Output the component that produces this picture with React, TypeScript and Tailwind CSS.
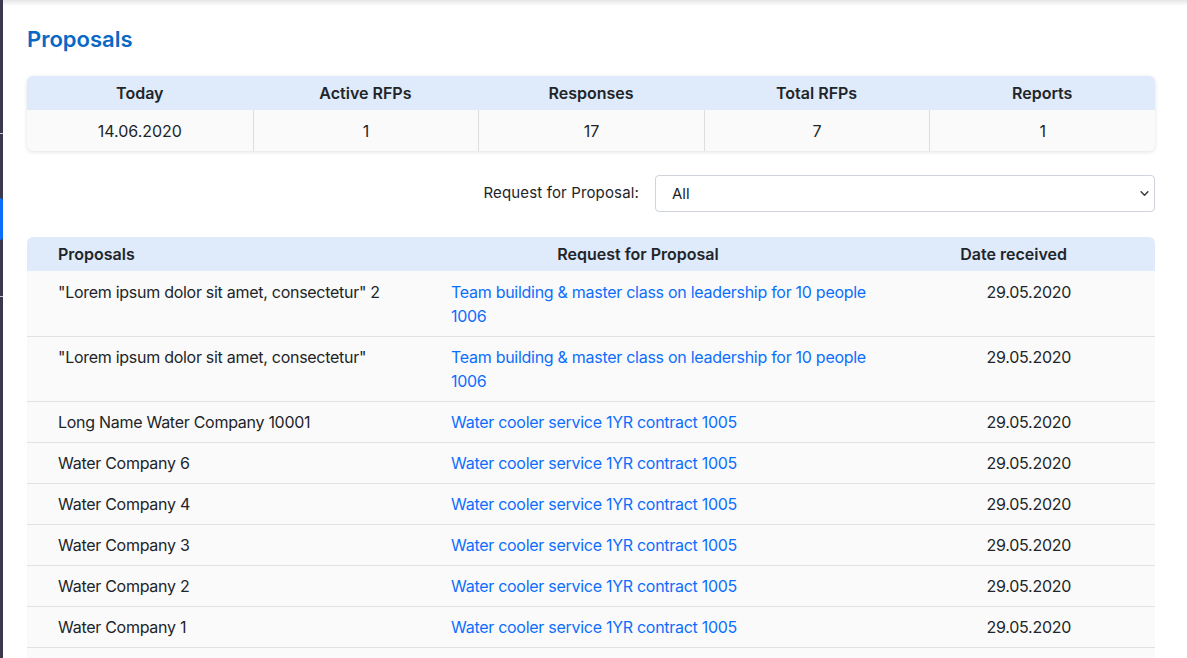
import React from "react";

const stats = [
  { label: "Today", value: "14.06.2020" },
  { label: "Active RFPs", value: "1" },
  { label: "Responses", value: "17" },
  { label: "Total RFPs", value: "7" },
  { label: "Reports", value: "1" },
];

const rows = [
  {
    name: "\"Lorem ipsum dolor sit amet, consectetur\" 2",
    rfp: "Team building & master class on leadership for 10 people 1006",
    date: "29.05.2020",
  },
  {
    name: "\"Lorem ipsum dolor sit amet, consectetur\"",
    rfp: "Team building & master class on leadership for 10 people 1006",
    date: "29.05.2020",
  },
  { name: "Long Name Water Company 10001", rfp: "Water cooler service 1YR contract 1005", date: "29.05.2020" },
  { name: "Water Company 6", rfp: "Water cooler service 1YR contract 1005", date: "29.05.2020" },
  { name: "Water Company 4", rfp: "Water cooler service 1YR contract 1005", date: "29.05.2020" },
  { name: "Water Company 3", rfp: "Water cooler service 1YR contract 1005", date: "29.05.2020" },
  { name: "Water Company 2", rfp: "Water cooler service 1YR contract 1005", date: "29.05.2020" },
  { name: "Water Company 1", rfp: "Water cooler service 1YR contract 1005", date: "29.05.2020" },
];

export default function App() {
  return (
    <div
      className="flex h-screen w-screen overflow-hidden bg-white text-[#212529]"
      style={{ fontFamily: "Inter, 'Noto Sans', sans-serif" }}
    >
      {/* Sidebar edge */}
      <div className="relative w-[3px] shrink-0 bg-[#3b3a4d]">
        <div className="absolute left-0 top-[133px] h-px w-full bg-[#c9c9d2]" />
        <div className="absolute left-0 top-[198px] h-[42px] w-full rounded-r-sm bg-[#0d6efd]" />
        <div className="absolute left-0 top-[296px] h-px w-full bg-[#c9c9d2]" />
      </div>

      {/* Main */}
      <div className="relative flex-1 overflow-hidden">
        <div className="absolute left-0 right-0 top-0 h-[6px] bg-gradient-to-b from-black/10 to-transparent" />
        <div className="pl-6 pr-8 pt-[25px]">
          <h1 className="mb-[22px] text-[22px] font-semibold leading-[29px] text-[#0868c6]">
            Proposals
          </h1>

          {/* Stats */}
          <div className="overflow-hidden rounded-md bg-[#fafafa] shadow-[0_1px_4px_rgba(0,0,0,0.12)]">
            <div className="grid grid-cols-5 bg-[#dfeafb]">
              {stats.map((s) => (
                <div key={s.label} className="h-[34px] text-center text-[16px] font-semibold leading-[34px]">
                  {s.label}
                </div>
              ))}
            </div>
            <div className="grid grid-cols-5">
              {stats.map((s, i) => (
                <div
                  key={s.label}
                  className={`h-[41px] pt-px text-center text-[16px] leading-[41px] ${
                    i > 0 ? "border-l border-[#dedede]" : ""
                  }`}
                >
                  {s.value}
                </div>
              ))}
            </div>
          </div>

          {/* Filter */}
          <div className="mt-[24px] flex items-center justify-end gap-4">
            <span className="text-[15px] tracking-[0.15px]">Request for Proposal:</span>
            <div className="flex h-[37px] w-[500px] items-center justify-between rounded border border-[#ced4da] bg-white pl-4 pr-[5px] text-[15px]">
              <span className="pt-px">All</span>
              <svg width="9" height="9" viewBox="0 0 16 16" fill="none">
                <path d="M2 5l6 6 6-6" stroke="#343a40" strokeWidth="2.6" strokeLinecap="round" strokeLinejoin="round" />
              </svg>
            </div>
          </div>

          {/* Proposals table */}
          <div className="mt-[25px] overflow-hidden rounded-t-md bg-[#fafafa]">
            <div className="grid h-[34px] grid-cols-[408px_470px_1fr] items-center bg-[#dfeafb] text-[16px] font-semibold">
              <div className="pl-[31px]">Proposals</div>
              <div className="pr-[64px] text-center">Request for Proposal</div>
              <div className="pr-[88px] text-right">Date received</div>
            </div>
            {rows.map((r, i) => (
              <div
                key={i}
                className={`grid grid-cols-[408px_470px_1fr] border-b border-[#e1e1e6] text-[16px] leading-[24px] tracking-[-0.28px] ${
                  i === 0 ? "pb-2 pt-[9px]" : "py-2"
                }`}
              >
                <div className="pl-[31px] pr-4">{r.name}</div>
                <div className="px-4">
                  <a href="#" className="text-[#0d6efd]">
                    {r.rfp}
                  </a>
                </div>
                <div className="pr-[84px] text-right">{r.date}</div>
              </div>
            ))}
            <div className="h-[20px] bg-[#fafafa]" />
          </div>
        </div>
      </div>
    </div>
  );
}
